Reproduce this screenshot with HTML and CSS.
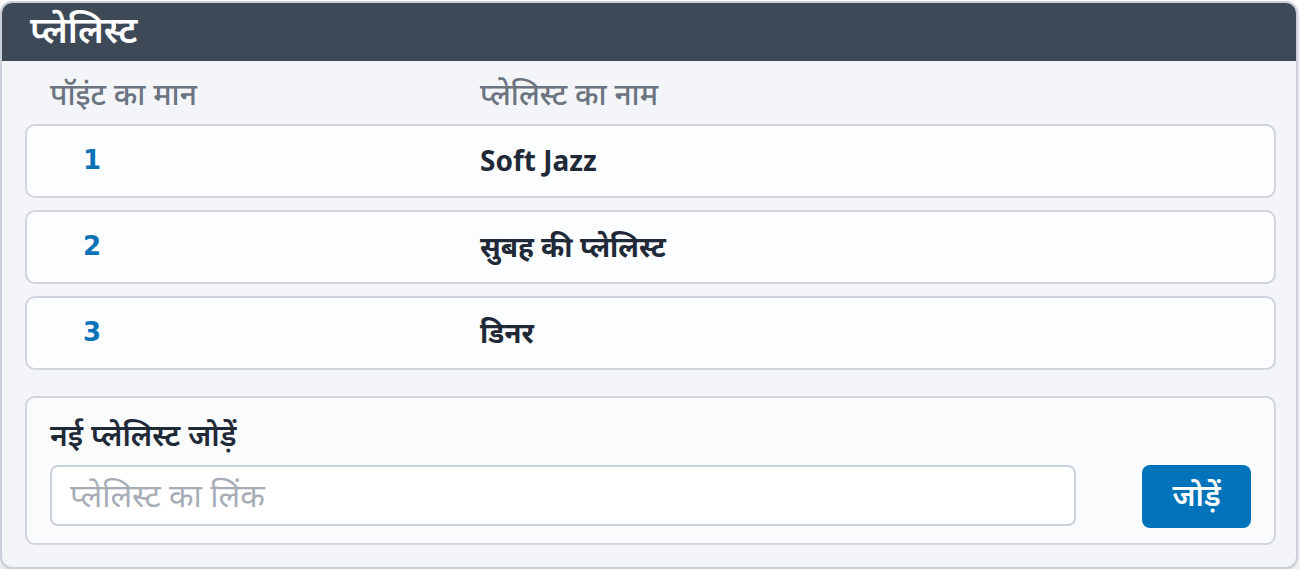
FILE: index.html
```html
<!DOCTYPE html>
<html lang="hi">
<head>
  <meta charset="UTF-8">
  <meta name="viewport" content="width=device-width, initial-scale=1.0">
  <title>प्लेलिस्ट</title>
  <link rel="stylesheet" href="styles.css">
</head>
<body>
  <div class="card">
    <!-- Header -->
    <div class="card-header">
      <h1>प्लेलिस्ट</h1>
    </div>

    <div class="card-body">
      <!-- Column labels -->
      <div class="list-head">
        <span class="col-point">पॉइंट का मान</span>
        <span class="col-name">प्लेलिस्ट का नाम</span>
      </div>

      <!-- Playlist rows -->
      <div class="list">
        <div class="list-row">
          <span class="point">1</span>
          <span class="name">Soft Jazz</span>
        </div>
        <div class="list-row">
          <span class="point">2</span>
          <span class="name">सुबह की प्लेलिस्ट</span>
        </div>
        <div class="list-row">
          <span class="point">3</span>
          <span class="name">डिनर</span>
        </div>
      </div>

      <!-- Add form -->
      <div class="add-form">
        <label for="playlistLink">नई प्लेलिस्ट जोड़ें</label>
        <div class="add-controls">
          <input type="text" id="playlistLink" placeholder="प्लेलिस्ट का लिंक">
          <button class="add-btn">जोड़ें</button>
        </div>
      </div>
    </div>
  </div>
</body>
</html>
```

FILE: styles.css
```css
* {
  margin: 0;
  padding: 0;
  box-sizing: border-box;
}

body {
  font-family: "Noto Sans", "Noto Sans Devanagari", sans-serif;
  background-color: #ffffff;
  padding: 1px 2px 0 0;
}

/* Card */
.card {
  width: 1298px;
  height: 568px;
  border: 2px solid #c9d0d9;
  border-radius: 12px;
  background-color: #f3f5f8;
  overflow: hidden;
  box-shadow: 0 5px 10px rgba(0, 0, 0, 0.16);
}

.card-header {
  height: 58px;
  background-color: #3d4957;
  display: flex;
  align-items: center;
  padding: 0 28px 5px;
}

.card-header h1 {
  color: #ffffff;
  font-size: 36px;
  font-weight: 600;
  line-height: 1;
}

.card-body {
  padding: 0 20px 0 23px;
}

/* Column labels */
.list-head {
  display: grid;
  grid-template-columns: 455px 1fr;
  height: 63px;
  align-items: center;
  color: #6b7480;
  font-size: 30px;
  font-weight: 500;
  line-height: 1;
  padding-top: 2px;
}

.list-head .col-point {
  padding-left: 25px;
}

/* Rows */
.list {
  display: flex;
  flex-direction: column;
  gap: 12px;
}

.list-row {
  display: grid;
  grid-template-columns: 453px 1fr;
  align-items: center;
  height: 74px;
  background-color: #fcfdfe;
  border: 2px solid #d1d6de;
  border-radius: 10px;
  font-size: 28px;
  font-weight: 700;
  line-height: 1;
  padding-bottom: 2px;
}

.list-row .point {
  padding-left: 56px;
  color: #0a73b8;
  font-family: "DejaVu Sans", sans-serif;
  font-size: 26px;
}

.list-row .name {
  color: #1f2937;
}

/* Add form */
.add-form {
  margin-top: 26px;
  height: 149px;
  background-color: #f9fbfc;
  border: 2px solid #d1d6de;
  border-radius: 10px;
  padding: 22px 23px 0;
}

.add-form label {
  display: block;
  font-size: 30px;
  font-weight: 600;
  color: #1f2937;
  line-height: 1;
  height: 45px;
}

.add-controls {
  display: flex;
  align-items: flex-start;
  gap: 66px;
}

.add-controls input {
  flex: 1;
  height: 61px;
  border: 2px solid #ccd2db;
  border-radius: 8px;
  background-color: #ffffff;
  padding: 0 18px 2px;
  font-family: inherit;
  font-size: 32px;
  color: #1f2937;
}

.add-controls input::placeholder {
  color: #a7adb7;
}

.add-btn {
  width: 109px;
  height: 63px;
  border: none;
  border-radius: 8px;
  background-color: #0073ba;
  color: #ffffff;
  font-family: inherit;
  font-size: 30px;
  font-weight: 600;
  padding-bottom: 4px;
  cursor: pointer;
}
```
